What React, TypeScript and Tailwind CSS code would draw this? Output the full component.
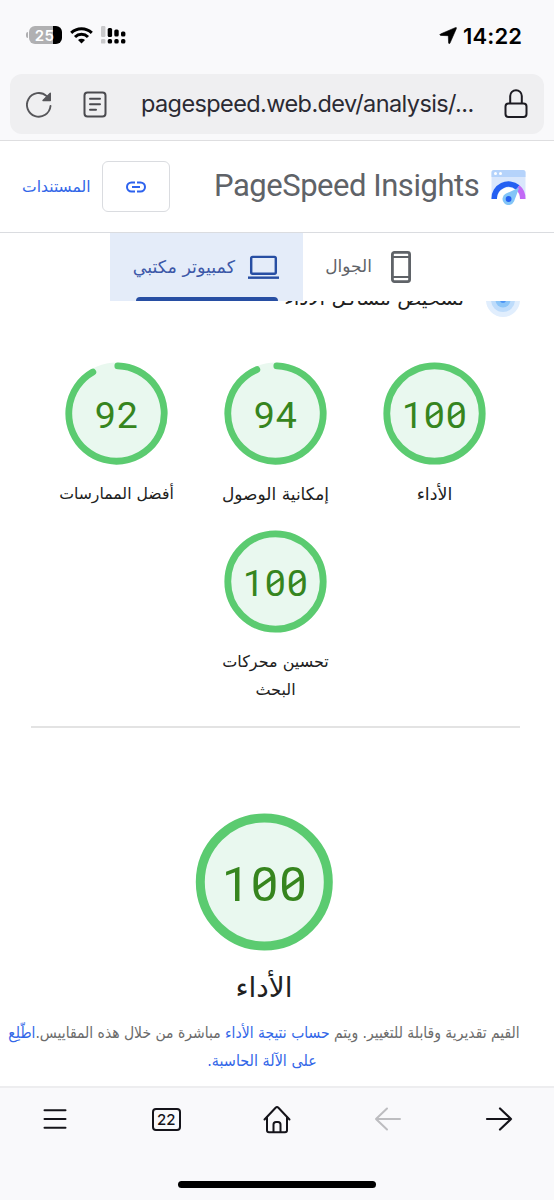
import type { ReactNode } from "react";

const ARABIC = "font-['DejaVu_Sans',sans-serif]";

export default function App() {
  return (
    <div className="flex h-[1200px] w-[554px] flex-col overflow-hidden bg-white">
      <StatusBar />
      <AddressBar />
      <Header />
      <Tabs />
      <Report />
      <Toolbar />
    </div>
  );
}

/* Arabic label, always on one line */
function Label({ className = "", children }: { className?: string; children: ReactNode }) {
  return (
    <span dir="rtl" className={`inline-block whitespace-nowrap ${ARABIC} ${className}`}>
      {children}
    </span>
  );
}

/* ---- Browser chrome ---- */

function StatusBar() {
  return (
    <div className="flex h-[74px] shrink-0 items-start justify-between bg-[#f9f9fb] pt-6 pr-8 pl-[26px]">
      <div className="flex h-[22px] items-center gap-2">
        <div className="flex items-center gap-px">
          <span className="h-1.5 w-[2px] rounded-l-full bg-[#b0b0b2]" />
          <span className="flex h-[18px] w-[33px] items-center justify-center overflow-hidden rounded-md bg-linear-to-r from-[#b0b0b2] from-[74%] to-black to-[74%] pr-0.5 font-['Inter',sans-serif] text-[15px] leading-none font-semibold tracking-wide text-white">
            25
          </span>
        </div>
        <svg width="23" height="17" viewBox="0 0 23 17" fill="none" stroke="black" strokeWidth="3">
          <path d="M1.2 5.9a15 15 0 0 1 20.6 0" />
          <path d="M5 10a9.3 9.3 0 0 1 13 0" />
          <path d="M8 13.1a5 5 0 0 1 7 0L11.5 16.6Z" fill="black" stroke="none" />
        </svg>
        <svg width="25" height="18" viewBox="0 0 25 18">
          <g fill="#c9c9cb">
            <rect x="0" y="0" width="4.4" height="11" rx="1.2" />
            <rect x="0" y="13" width="4.4" height="4.6" rx="1.2" />
          </g>
          <rect x="6.7" y="2" width="4.4" height="9" rx="1.5" />
          <rect x="13.3" y="3.6" width="4.4" height="7" rx="1.5" />
          <rect x="20" y="5.6" width="4.4" height="5" rx="1.5" />
          <rect x="6.7" y="13" width="4.4" height="4.6" rx="1.7" />
          <rect x="13.3" y="13" width="4.4" height="4.6" rx="1.7" />
          <rect x="20" y="13" width="4.4" height="4.6" rx="1.7" />
        </svg>
      </div>
      <div className="flex h-[23px] items-center gap-1.5">
        <svg width="18" height="18" viewBox="0 0 18 18">
          <path d="M16.2.7Q17.9 0 17.3 1.7L11 16.1Q10.3 17.5 9.6 16.1L9.3 9.3Q9.2 8.8 8.7 8.7L1.6 8.4Q0 7.8 1.5 7Z" stroke="black" strokeWidth="0.6" />
        </svg>
        <span className="font-['Inter',sans-serif] text-[22px] leading-none font-semibold tracking-[0.1px]">
          14:22
        </span>
      </div>
    </div>
  );
}

function AddressBar() {
  return (
    <div className="h-[67px] shrink-0 border-b border-[#dedee0] bg-[#f9f9fb] px-2.5">
      <div className="flex h-[60px] items-center rounded-xl bg-[#efeff1] px-4">
        <svg width="26" height="28" viewBox="0 0 26 28" fill="none" stroke="#56565a" strokeWidth="1.9" strokeLinecap="round">
          <path d="M20.7 6.1A11.8 11.8 0 1 0 24.5 16" />
          <path d="M24.3 3.2V10.5H17Z" fill="#56565a" strokeWidth="1.4" strokeLinejoin="round" />
        </svg>
        <svg className="ml-[31px]" width="24" height="27" viewBox="0 0 24 27" fill="none" stroke="#4a4a4f" strokeWidth="2" strokeLinecap="round">
          <rect x="1.5" y="1.5" width="21" height="24" rx="3" />
          <path d="M7 7.8h10M7 13.3h10M7 18.8h6" />
        </svg>
        <span className="ml-[34px] w-[335px] font-['Inter',sans-serif] text-[23.5px] tracking-[-0.6px] whitespace-nowrap text-[#2b2a33]">
          pagespeed.web.dev/analysis/...
        </span>
        <svg className="ml-auto" width="24" height="30" viewBox="0 0 24 30" fill="none" stroke="#1c1b22" strokeWidth="2">
          <rect x="1.5" y="14.5" width="21" height="13.5" rx="3" />
          <path d="M6.2 14.5V7A5.8 5.8 0 0 1 17.8 7v7.5" />
        </svg>
      </div>
    </div>
  );
}

/* ---- Page header ---- */

function Logo() {
  return (
    <svg width="36" height="36" viewBox="0 0 36 36">
      <path d="M3 1H32a2.5 2.5 0 0 1 2.5 2.5V30H.5V3.5A2.5 2.5 0 0 1 3 1Z" fill="#d9e7fc" />
      <path d="M3 1H32a2.5 2.5 0 0 1 2.5 2.5V8H.5V3.5A2.5 2.5 0 0 1 3 1Z" fill="#b5d3fb" />
      <circle cx="4.5" cy="4.5" r="1.5" fill="white" />
      <circle cx="9.5" cy="4.5" r="1.5" fill="white" />
      <path d="M6 30a11.5 11.5 0 0 1 23 0Z" fill="white" />
      <path d="M.5 30A17 17 0 0 1 28.5 16.3L25 20.8A11.5 11.5 0 0 0 6 30Z" fill="#2460f2" />
      <path d="M28.5 16.3A17 17 0 0 1 34.5 30H29A11.5 11.5 0 0 0 25 20.8Z" fill="#c26af5" />
      <path d="M28.3 18.5 15 24.6A6 6 0 1 0 23 32.5Z" fill="#83c5f7" />
      <circle cx="17.6" cy="30" r="2.9" fill="#2460f2" />
    </svg>
  );
}

function Header() {
  return (
    <header className="flex h-[92px] shrink-0 items-center border-b border-[#dadce0] pr-[27px] pl-[22px]">
      <a className="w-[69px] text-[#3367e8]">
        <Label className="text-[15.6px]">المستندات</Label>
      </a>
      <button className="ml-[11px] flex h-[51px] w-[68px] items-center justify-center rounded-md border border-[#dadce0]">
        <svg width="20" height="12" viewBox="0 0 20 12" fill="none" stroke="#2d62ee" strokeWidth="2">
          <path d="M9 1.5H5.5a4.5 4.5 0 0 0 0 9H9M11 1.5h3.5a4.5 4.5 0 0 1 0 9H11M6 6h8" />
        </svg>
      </button>
      <h1 className="ml-[44px] w-[266px] font-['Roboto',sans-serif] text-[31px] tracking-[-0.47px] whitespace-nowrap text-[#5f6368]">
        PageSpeed Insights
      </h1>
      <div className="ml-auto">
        <Logo />
      </div>
    </header>
  );
}

function Tabs() {
  return (
    <nav dir="rtl" className="flex h-[68px] shrink-0 pr-[119px]">
      <div className="flex w-[132px] items-center pr-6 text-[#5f6368]">
        <svg width="20" height="32" viewBox="0 0 20 32" fill="none" stroke="#5f6368" strokeWidth="2.8">
          <rect x="1.4" y="1.4" width="17.2" height="29.2" rx="2" />
          <path d="M1 6h18M1 26h18" strokeWidth="2.2" />
        </svg>
        <Label className="mr-[19px] text-[17px]">الجوال</Label>
      </div>
      <div className="flex w-[193px] flex-col bg-[#e4ecf9] text-[#3c58a8]">
        <div className="flex h-16 items-center pt-1 pr-6">
          <svg width="31" height="25" viewBox="0 0 32 25" fill="none" stroke="#274ea3" strokeWidth="2.5">
            <rect x="3.3" y="1.5" width="25.4" height="17.5" rx="1.5" />
            <path d="M0 23h32" />
          </svg>
          <Label className="mr-[13px] text-[17.5px]">كمبيوتر مكتبي</Label>
        </div>
        <div className="mr-[25px] h-1 w-[142px] rounded-t-sm bg-[#274ea3]" />
      </div>
    </nav>
  );
}

/* ---- Report ---- */

function arc(cx: number, r: number, from: number, to: number) {
  const point = (deg: number) => {
    const a = (deg * Math.PI) / 180;
    return `${cx + r * Math.sin(a)} ${cx - r * Math.cos(a)}`;
  };
  return `M${point(from)}A${r} ${r} 0 1 1 ${point(to)}`;
}

/* Slashes across the two zeros of a full score */
function Slashes({ x, y, gap, w, h, stroke }: { x: number; y: number; gap: number; w: number; h: number; stroke: number }) {
  return (
    <g stroke="#36851e" strokeWidth={stroke}>
      <path d={`M${x} ${y + h}l${w} ${-h}`} />
      <path d={`M${x + gap} ${y + h}l${w} ${-h}`} />
    </g>
  );
}

function Gauge({ score, end }: { score: number; end?: number }) {
  return (
    <svg className="shrink-0" width="103" height="103" viewBox="0 0 103 103" direction="ltr">
      <circle cx="51.5" cy="51.5" r="51" fill="#e9f8ef" />
      {end ? (
        <path d={arc(51.5, 47.7, 1.6, end)} fill="none" stroke="#5bcb70" strokeWidth="6.8" strokeLinecap="round" />
      ) : (
        <circle cx="51.5" cy="51.5" r="47.7" fill="none" stroke="#5bcb70" strokeWidth="6.8" />
      )}
      <text
        x="51.7"
        y="65.5"
        textAnchor="middle"
        fill="#36851e"
        className="font-['Roboto',sans-serif] text-[37.5px] tracking-[0.8px]"
      >
        {score}
      </text>
      {score === 100 && <Slashes x={45.2} y={47.7} gap={22} w={13} h={9} stroke={2.6} />}
    </svg>
  );
}

const SCORES = [
  { name: ["الأداء"], score: 100, size: "text-[17.5px]" },
  { name: ["إمكانية الوصول"], score: 94, end: 337, size: "text-[17px]" },
  { name: ["أفضل الممارسات"], score: 92, end: 330.3, size: "text-[15.7px]" },
  { name: ["تحسين محركات", "البحث"], score: 100, size: "text-base" },
];

function Report() {
  return (
    <main dir="rtl" className="flex h-[785px] shrink-0 flex-col overflow-hidden text-[#212121]">
      <div className="flex h-[61px] items-start pr-[34px]">
        <svg className="-mt-[18px] shrink-0" width="34" height="34" viewBox="0 0 34 34">
          <circle cx="17" cy="17" r="17" fill="#e1eefd" />
          <circle cx="17" cy="17" r="12" fill="#bedcfb" />
          <circle cx="17" cy="17" r="7.5" fill="#8cc5f8" />
          <circle cx="17" cy="17" r="3" fill="#4a94f5" />
        </svg>
        <Label className="mr-[22px] -mt-[17px] text-xl leading-7">تشخيص مشاكل الأداء</Label>
      </div>
      <div className="flex flex-wrap justify-center pr-[38px] pl-[35px]">
        {SCORES.map(({ name, score, end, size }) => (
          <div key={name[0]} className="flex h-[168px] w-[159px] flex-col items-center">
            <Gauge score={score} end={end} />
            <div className="mt-[15px] flex flex-col items-center">
              {name.map((line) => (
                <Label key={line} className={`leading-7 ${size}`}>
                  {line}
                </Label>
              ))}
            </div>
          </div>
        ))}
      </div>
      <hr className="mt-7 mr-[34px] ml-[31px] border-t-2 border-[#e3e3e3]" />
      <section className="mt-[85px] flex flex-col items-center pr-[26px]">
        <svg width="138" height="138" viewBox="0 0 138 138" direction="ltr">
          <circle cx="69.3" cy="69" r="64" fill="#e9f8ef" stroke="#5bcb70" strokeWidth="9" />
          <text
            x="70"
            y="87.5"
            textAnchor="middle"
            fill="#36851e"
            className="font-['Roboto',sans-serif] text-[49px] tracking-[1.1px]"
          >
            100
          </text>
          <Slashes x={61} y={64} gap={28.8} w={17} h={12} stroke={3.4} />
        </svg>
        <h2 className="mt-[17px]">
          <Label className="text-[28px] leading-10">الأداء</Label>
        </h2>
        <p className="mt-[11px] flex flex-col items-center text-[#6b6b6b]">
          <Label className="text-[15.5px] leading-7 [font-stretch:condensed]">
            القيم تقديرية وقابلة للتغيير. ويتم <a className="text-[#3367e8]">حساب نتيجة الأداء</a> مباشرة من خلال هذه المقاييس.
            <a className="text-[#3367e8]">اطّلِع</a>
          </Label>
          <Label className="pr-1 text-base leading-7 text-[#3367e8] [font-stretch:condensed]">على الآلة الحاسبة.</Label>
        </p>
      </section>
    </main>
  );
}

/* ---- Bottom toolbar ---- */

function Toolbar() {
  return (
    <footer className="flex grow flex-col items-center border-t-2 border-[#ededef] bg-[#f9f9fb]">
      <div className="grid h-[62px] w-full grid-cols-5 place-items-center text-[#15141a]">
        <svg width="24" height="22" viewBox="0 0 24 22" stroke="currentColor" strokeWidth="2" strokeLinecap="round">
          <path d="M1.5 2.2h21M1.5 11h21M1.5 19.8h21" />
        </svg>
        <span className="flex h-[23px] w-[29px] items-center justify-center rounded-[4px] border-2 border-current font-['Inter',sans-serif] text-[15px] leading-none font-medium">
          22
        </span>
        <svg width="28" height="29" viewBox="0 0 28 29" fill="none" stroke="currentColor" strokeWidth="2" strokeLinecap="round" strokeLinejoin="round">
          <path d="M1.5 14.5 12.6 2.7Q14 1.4 15.4 2.7L26.5 14.5" />
          <path d="M4 12.5V25.3Q4 27.3 6 27.3H22Q24 27.3 24 25.3V12.5" />
          <path d="M10.5 27V19.5Q10.5 17 13 17H15Q17.5 17 17.5 19.5V27" />
        </svg>
        <svg width="28" height="24" viewBox="0 0 28 24" fill="none" stroke="#bdbdc0" strokeWidth="2" strokeLinecap="round" strokeLinejoin="round">
          <path d="M26 12H2M13 1.5 2 12 13 22.5" />
        </svg>
        <svg width="28" height="24" viewBox="0 0 28 24" fill="none" stroke="currentColor" strokeWidth="2.2" strokeLinecap="round" strokeLinejoin="round">
          <path d="M2 12H26M15 1.5 26 12 15 22.5" />
        </svg>
      </div>
      <div className="mt-[31px] h-[7px] w-[198px] rounded-full bg-black" />
    </footer>
  );
}
